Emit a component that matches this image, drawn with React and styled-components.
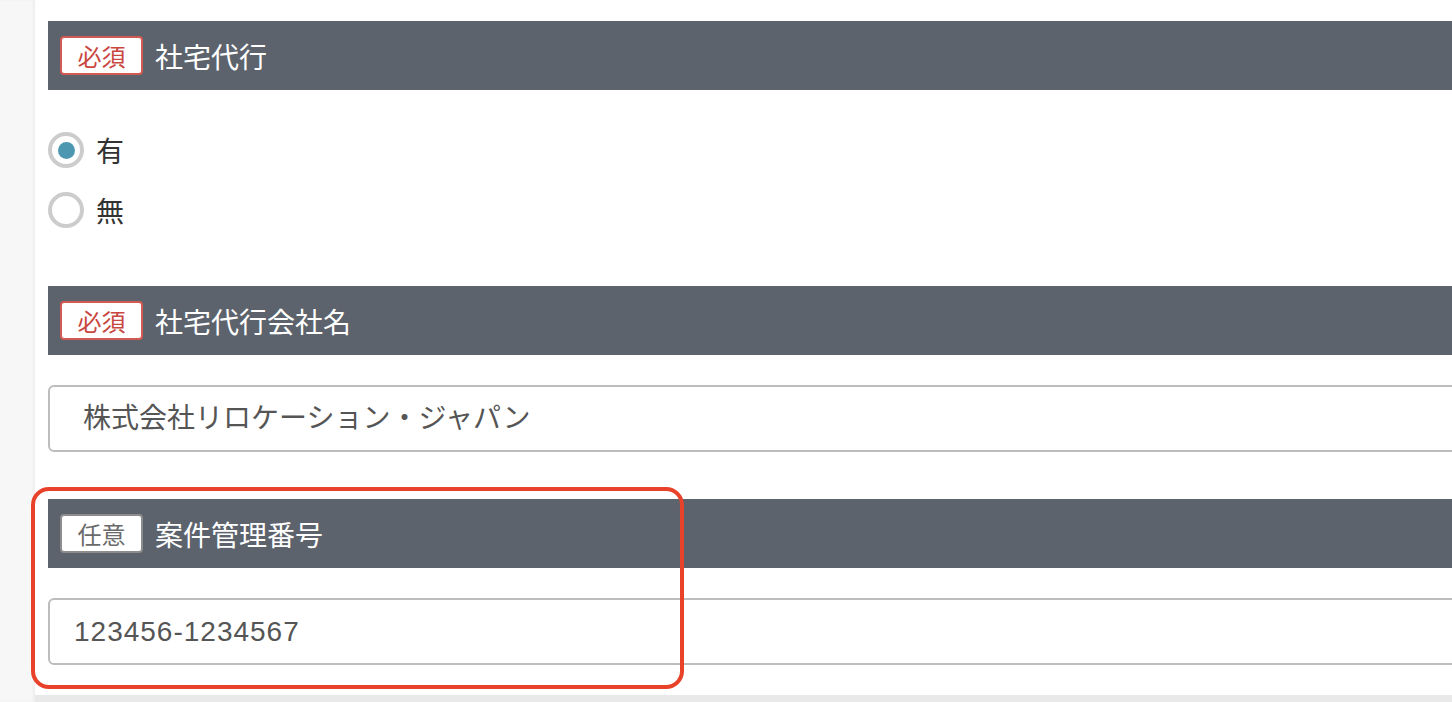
import React from 'react';
import styled, { createGlobalStyle } from 'styled-components';

const GlobalStyle = createGlobalStyle`
  html, body {
    margin: 0;
    padding: 0;
    background: #f7f7f7;
    overflow: hidden;
  }
  body {
    font-family: "Liberation Sans", "Noto Sans CJK JP", sans-serif;
  }
`;

const Page = styled.div`
  display: flex;
  height: 702px;
  background: #e9e9e9;
`;

const Side = styled.div`
  width: 35px;
  flex: none;
  background: #f7f7f7;
  box-shadow: inset -2px 0 3px rgba(0, 0, 0, 0.04);
`;

const Card = styled.div`
  flex: none;
  width: 1500px;
  height: 695px;
  background: #fff;
  box-sizing: border-box;
  padding: 21px 0 0 13px;
  display: flex;
  flex-direction: column;
`;

const Field = styled.section`
  position: relative;
  margin-bottom: ${(p) => p.$after}px;
`;

const Header = styled.div`
  height: 69px;
  background: #5c636d;
  display: flex;
  align-items: center;
  padding-left: 12px;
  gap: 12px;
`;

const Badge = styled.span`
  width: 83px;
  height: 39px;
  box-sizing: border-box;
  display: flex;
  align-items: center;
  justify-content: center;
  background: #fff;
  border: 2px solid ${(p) => (p.$required ? '#d35a52' : '#8c8c8c')};
  border-radius: 4px;
  color: ${(p) => (p.$required ? '#c9473f' : '#6a6a6a')};
  font-family: "Noto Sans CJK JP", sans-serif;
  font-size: 24px;
  line-height: 1;
`;

const Title = styled.h3`
  margin: 0;
  color: #fff;
  font-family: "Noto Sans CJK JP", sans-serif;
  font-size: 28px;
  font-weight: 400;
  line-height: 1;
`;

const RadioGroup = styled.div`
  display: flex;
  flex-direction: column;
  gap: 24px;
  padding-top: 42px;
`;

const RadioRow = styled.label`
  display: flex;
  align-items: center;
  gap: 12px;
  height: 36px;
  color: #333;
  font-family: "Noto Sans CJK JP", sans-serif;
  font-size: 28px;
  line-height: 1;
`;

const RadioMark = styled.span`
  width: 36px;
  height: 36px;
  box-sizing: border-box;
  border: 4px solid #cccccc;
  border-radius: 50%;
  background: #fff;
  display: flex;
  align-items: center;
  justify-content: center;
  &::after {
    content: '';
    width: 17px;
    height: 17px;
    border-radius: 50%;
    background: ${(p) => (p.$checked ? '#4d97b0' : 'transparent')};
  }
`;

const Input = styled.div`
  margin-top: 30px;
  height: 67px;
  box-sizing: border-box;
  border: 2px solid #bdbdbd;
  border-radius: 6px;
  display: flex;
  align-items: center;
  padding-left: ${(p) => p.$pad}px;
  color: #555;
  font-size: 28px;
  letter-spacing: ${(p) => p.$spacing || 0}px;
  line-height: 1;
`;

const Highlight = styled.div`
  position: absolute;
  left: -17px;
  top: -12px;
  width: 653px;
  height: 202px;
  box-sizing: border-box;
  border: 4px solid #e8432a;
  border-radius: 18px;
  pointer-events: none;
`;

export default function App() {
  return (
    <>
      <GlobalStyle />
      <Page>
        <Side />
        <Card>
          <Field $after={58}>
            <Header>
              <Badge $required>必須</Badge>
              <Title>社宅代行</Title>
            </Header>
            <RadioGroup>
              <RadioRow>
                <RadioMark $checked />
                有
              </RadioRow>
              <RadioRow>
                <RadioMark />
                無
              </RadioRow>
            </RadioGroup>
          </Field>
          <Field $after={47}>
            <Header>
              <Badge $required>必須</Badge>
              <Title>社宅代行会社名</Title>
            </Header>
            <Input $pad={33}>株式会社リロケーション・ジャパン</Input>
          </Field>
          <Field $after={0}>
            <Header>
              <Badge>任意</Badge>
              <Title>案件管理番号</Title>
            </Header>
            <Input $pad={24} $spacing={1}>123456-1234567</Input>
            <Highlight />
          </Field>
        </Card>
      </Page>
    </>
  );
}
